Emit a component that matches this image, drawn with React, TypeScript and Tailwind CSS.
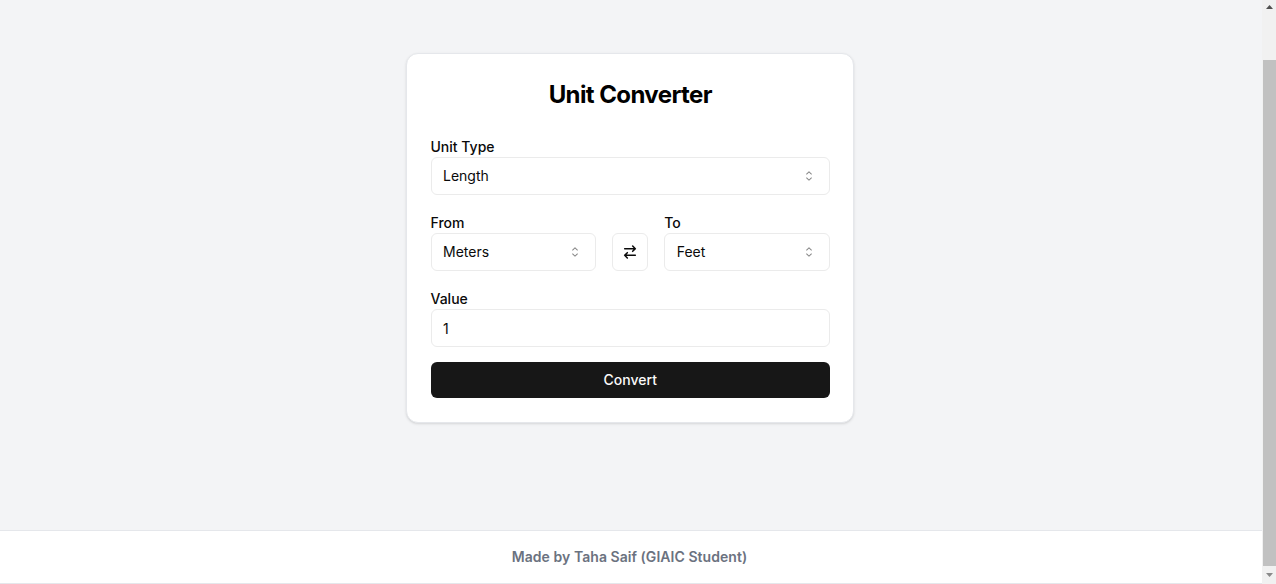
import React from "react";

function Chevrons() {
  return (
    <svg width="15" height="15" viewBox="0 0 15 15" fill="none" className="h-4 w-4 opacity-50">
      <path
        d="M4.93179 5.43179C4.75605 5.60753 4.75605 5.89245 4.93179 6.06819C5.10753 6.24392 5.39245 6.24392 5.56819 6.06819L7.49999 4.13638L9.43179 6.06819C9.60753 6.24392 9.89245 6.24392 10.0682 6.06819C10.2439 5.89245 10.2439 5.60753 10.0682 5.43179L7.81819 3.18179C7.73379 3.0974 7.61933 3.04999 7.49999 3.04999C7.38064 3.04999 7.26618 3.0974 7.18179 3.18179L4.93179 5.43179ZM10.0682 9.56819C10.2439 9.39245 10.2439 9.10753 10.0682 8.93179C9.89245 8.75606 9.60753 8.75606 9.43179 8.93179L7.49999 10.8636L5.56819 8.93179C5.39245 8.75606 5.10753 8.75606 4.93179 8.93179C4.75605 9.10753 4.75605 9.39245 4.93179 9.56819L7.18179 11.8182C7.35753 11.9939 7.64245 11.9939 7.81819 11.8182L10.0682 9.56819Z"
        fill="currentColor"
        fillRule="evenodd"
        clipRule="evenodd"
      />
    </svg>
  );
}

function Select({ label, value }: { label: string; value: string }) {
  return (
    <div className="flex-1">
      <div className="flex h-[22px] items-center pt-0.5 text-sm font-medium">{label}</div>
      <button className="flex h-[38px] w-full items-center justify-between rounded-md border border-[#ebebeb] pr-3 pl-[11.5px] text-sm">
        {value}
        <Chevrons />
      </button>
    </div>
  );
}

export default function App() {
  return (
    <div className="flex h-[584px] w-full overflow-hidden bg-[#f3f4f6] font-['Inter',sans-serif] text-[#0a0a0a]">
      <div className="flex min-w-0 flex-1 flex-col">
        <main className="flex-1 pt-[53px]">
          <div className="mx-auto ml-[406px] flex h-[370px] w-[448px] flex-col rounded-xl border border-[#e5e7eb] bg-white pt-[25px] pr-[23px] pl-[23.5px] shadow-sm">
            <h1 className="text-center text-2xl leading-8 font-bold tracking-tight text-black">Unit Converter</h1>
            <div className="mt-6 flex">
              <Select label="Unit Type" value="Length" />
            </div>
            <div className="mt-4 flex items-end gap-4">
              <Select label="From" value="Meters" />
              <button className="flex h-[38px] w-9 items-center justify-center rounded-md border border-[#ebebeb]">
                <svg viewBox="0 0 24 24" className="h-4 w-4" fill="none" stroke="currentColor" strokeWidth="2.25" strokeLinecap="round" strokeLinejoin="round">
                  <path d="m16 3 4 4-4 4M20 7H4M8 21l-4-4 4-4M4 17h16" />
                </svg>
              </button>
              <Select label="To" value="Feet" />
            </div>
            <div className="mt-4 flex h-[22px] items-center pt-0.5 text-sm font-medium">Value</div>
            <input defaultValue="1" className="h-[38px] w-full rounded-md border border-[#ebebeb] px-[11.5px] text-sm" />
            <button className="mt-[15px] h-9 rounded-md bg-[#171717] text-sm font-medium text-[#fafafa]">Convert</button>
          </div>
        </main>
        <footer className="flex h-[54px] items-center justify-center border-y border-[#e5e7eb] bg-white pr-[3px] text-sm font-semibold tracking-[0.05px] text-[#6b7280]">
          Made by Taha Saif (GIAIC Student)
        </footer>
      </div>
      <div className="flex w-[14px] flex-col items-center bg-[#f1f1f1]">
        <svg width="14" height="14" viewBox="0 0 14 14" className="shrink-0"><path d="M4 9h7L7.5 5z" fill="#505050" /></svg>
        <div className="mt-[46px] ml-px w-[13px] flex-1 bg-[#c1c1c1]" />
        <svg width="14" height="18" viewBox="0 0 14 18" className="shrink-0"><path d="M4 7h7L7.5 11z" fill="#8a8a8a" /></svg>
      </div>
    </div>
  );
}
